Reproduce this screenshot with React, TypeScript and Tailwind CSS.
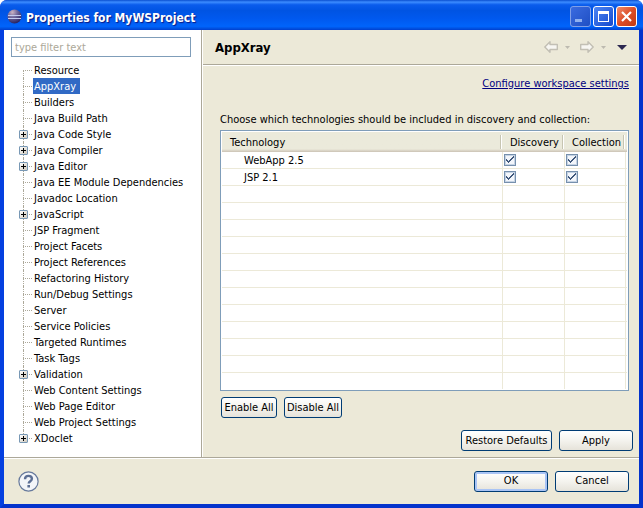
import { useState } from 'react';
import clsx from 'clsx';

const treeItems = [
  { label: 'Resource' },
  { label: 'AppXray' },
  { label: 'Builders' },
  { label: 'Java Build Path' },
  { label: 'Java Code Style', expandable: true },
  { label: 'Java Compiler', expandable: true },
  { label: 'Java Editor', expandable: true },
  { label: 'Java EE Module Dependencies' },
  { label: 'Javadoc Location' },
  { label: 'JavaScript', expandable: true },
  { label: 'JSP Fragment' },
  { label: 'Project Facets' },
  { label: 'Project References' },
  { label: 'Refactoring History' },
  { label: 'Run/Debug Settings' },
  { label: 'Server' },
  { label: 'Service Policies' },
  { label: 'Targeted Runtimes' },
  { label: 'Task Tags' },
  { label: 'Validation', expandable: true },
  { label: 'Web Content Settings' },
  { label: 'Web Page Editor' },
  { label: 'Web Project Settings' },
  { label: 'XDoclet', expandable: true },
];

const technologies = ['WebApp 2.5', 'JSP 2.1'];
const emptyRows = Array.from({ length: 12 }, (_, i) => i);

interface ButtonProps {
  label: string;
  className?: string;
  isDefault?: boolean;
  onClick?: () => void;
}

function Button({ label, className, isDefault, onClick }: ButtonProps) {
  return (
    <button
      type="button"
      onClick={onClick}
      className={clsx(
        'h-[21px] shrink-0 rounded-[3px] border border-[#003c74] bg-linear-to-b from-white via-[#f4f3ee] to-[#e6e3da] text-center leading-[18px] whitespace-nowrap',
        isDefault && 'shadow-[inset_0_0_0_2px_#a9c4f5]',
        className
      )}
    >
      {label}
    </button>
  );
}

function Check({ label, checked, onChange }: { label: string; checked: boolean; onChange: () => void }) {
  return (
    <div className="relative ml-px h-3 w-3">
      <input
        type="checkbox"
        aria-label={label}
        checked={checked}
        onChange={onChange}
        className="block h-3 w-3 appearance-none border border-[#7690ad] bg-[#f3f6fb] shadow-[inset_0_0_0_1px_#c5d3e4]"
      />
      {checked && (
        <svg viewBox="0 0 12 12" className="pointer-events-none absolute inset-0 h-3 w-3" fill="#40587c" shapeRendering="crispEdges">
          <path d="M2 5h1v1h1v1h1v-1h1v-1h1v-1h1v-1h1v-1h1v2h-1v1h-1v1h-1v1h-1v1h-1v1h-1v-1h-1v-1h-1z" />
        </svg>
      )}
    </div>
  );
}

function TitleBar() {
  return (
    <header className="flex h-[30px] items-center bg-[linear-gradient(180deg,#0a4fd0_0%,#3c8cff_7%,#0a5cec_16%,#0054e3_35%,#0058ee_60%,#0064fb_88%,#0050e0_95%,#003fcf_100%)] pr-[6px] pl-[7px]">
      <svg viewBox="0 0 15 15" className="mt-[3px] h-[15px] w-[15px] shrink-0">
        <defs>
          <radialGradient id="globe" cx="0.35" cy="0.2" r="0.8">
            <stop offset="0" stopColor="#cbb3c2" />
            <stop offset="0.45" stopColor="#6f679c" />
            <stop offset="1" stopColor="#2a2562" />
          </radialGradient>
        </defs>
        <circle cx="7.5" cy="7.5" r="7" fill="url(#globe)" />
        <path d="M1 6.5h13M1 9.5h13" stroke="#c4cbee" strokeWidth="1" />
      </svg>
      <h1 className="mt-[5px] ml-1 flex-1 text-[12px] leading-4 font-bold whitespace-nowrap text-white [text-shadow:1px_1px_1px_#0a1883]">
        Properties for MyWSProject
      </h1>
      <div className="mt-[3px] flex gap-[2px]">
        <button type="button" aria-label="Minimize" className="h-[21px] w-[21px] rounded-[3px] border border-[#7f9fe8] bg-linear-to-br from-[#3a6be0] to-[#1f4fc4]">
          <svg viewBox="0 0 19 19" className="h-full w-full">
            <path d="M4 12h7v3h-7z" fill="#8fb0f0" />
          </svg>
        </button>
        <button type="button" aria-label="Maximize" className="h-[21px] w-[21px] rounded-[3px] border border-white bg-linear-to-br from-[#4e86f4] to-[#1447cc]">
          <svg viewBox="0 0 19 19" className="h-full w-full" shapeRendering="crispEdges">
            <path d="M4 4h11v11h-11zM5 7v7h9v-7z" fill="#fff" fillRule="evenodd" />
          </svg>
        </button>
        <button type="button" aria-label="Close" className="h-[21px] w-[21px] rounded-[3px] border border-white bg-linear-to-br from-[#f08a68] via-[#dc4d26] to-[#c03a14]">
          <svg viewBox="0 0 19 19" className="h-full w-full">
            <path d="M5 5l9 9M14 5l-9 9" stroke="#fff" strokeWidth="2.2" />
          </svg>
        </button>
      </div>
    </header>
  );
}

interface SidebarProps {
  selected: string;
  onSelect: (label: string) => void;
}

function Sidebar({ selected, onSelect }: SidebarProps) {
  return (
    <aside className="w-[198px] shrink-0 border-r border-[#aca899] bg-white pt-[7px] pb-[11px]">
      <input
        type="text"
        aria-label="Filter"
        placeholder="type filter text"
        className="mr-[10px] ml-[7px] block h-5 w-[180px] border border-[#7f9db9] bg-white px-[3px] leading-4 placeholder:text-[#aca899]"
      />
      <ul className="mt-[5px] pl-[15px]">
        {treeItems.map(({ label, expandable }, i) => (
          <li key={label} className="relative flex h-4 items-center">
            <span
              className={clsx(
                'absolute left-1 border-l border-dotted border-[#aca899]',
                i === 0 ? 'top-2 bottom-0' : i === treeItems.length - 1 ? 'top-0 bottom-2' : 'inset-y-0'
              )}
            />
            <span className="absolute top-2 left-1 w-[9px] border-t border-dotted border-[#aca899]" />
            {expandable && (
              <button
                type="button"
                aria-label={`Expand ${label}`}
                className="absolute top-1 left-0 h-[9px] w-[9px] rounded-[1px] border border-[#7898b5] bg-linear-to-br from-white to-[#cfc9bd]"
              >
                <svg viewBox="0 0 7 7" className="block h-[7px] w-[7px]" shapeRendering="crispEdges">
                  <path d="M1 3h5v1h-5zM3 1h1v5h-1z" fill="#000" />
                </svg>
              </button>
            )}
            <button
              type="button"
              onClick={() => onSelect(label)}
              className={clsx(
                'ml-[14px] h-4 pt-px pr-1 pl-px leading-4 whitespace-nowrap',
                selected === label && 'bg-[#316ac5] text-white'
              )}
            >
              {label}
            </button>
          </li>
        ))}
      </ul>
    </aside>
  );
}

function NavArrow({ flip }: { flip?: boolean }) {
  return (
    <svg viewBox="0 0 14 12" className={clsx('h-3 w-[14px]', flip && '-scale-x-100')}>
      <path d="M0.8 6L6 0.8V3.5H13.3V8.5H6V11.2Z" fill="#f7f6f2" stroke="#c2bfb4" strokeWidth="1.4" strokeLinejoin="round" />
    </svg>
  );
}

function PageHeader() {
  return (
    <div className="flex h-[35px] items-center border-b border-[#aca899] pr-[12px] pl-3 shadow-[0_1px_0_#fff]">
      <h2 className="mt-[2px] flex-1 text-[13px] leading-4 font-bold">AppXray</h2>
      <button type="button" aria-label="Back">
        <NavArrow />
      </button>
      <button type="button" aria-label="Back history" className="ml-[7px]">
        <svg viewBox="0 0 5 3" className="h-[3px] w-[5px]">
          <path d="M0 0h5L2.5 3z" fill="#bdbab0" />
        </svg>
      </button>
      <button type="button" aria-label="Forward" className="ml-[10px]">
        <NavArrow flip />
      </button>
      <button type="button" aria-label="Forward history" className="ml-[7px]">
        <svg viewBox="0 0 5 3" className="h-[3px] w-[5px]">
          <path d="M0 0h5L2.5 3z" fill="#bdbab0" />
        </svg>
      </button>
      <button type="button" aria-label="Menu" className="ml-[11px]">
        <svg viewBox="0 0 10 5" className="h-[5px] w-[10px]">
          <path d="M0 0h10L5 5z" fill="#2c2850" />
        </svg>
      </button>
    </div>
  );
}

const headSpan = 'block h-[14px] border-r border-[#c7c5b2] leading-4 shadow-[1px_0_0_#fff]';
const cell = 'h-[17px] border-r border-b border-[#ece9d8] p-0 group-last:border-b-0 group-last:h-4';

interface TechnologyTableProps {
  checks: Record<string, boolean>;
  onToggle: (key: string) => void;
}

function TechnologyTable({ checks, onToggle }: TechnologyTableProps) {
  return (
    <div className="mt-px border border-[#7f9db9] bg-white p-px">
      <table className="w-full table-fixed border-separate border-spacing-0">
        <colgroup>
          <col />
          <col className="w-[62px]" />
          <col className="w-[61px]" />
          <col className="w-px" />
        </colgroup>
        <thead>
          <tr className="bg-linear-to-b from-[#ebeadb] from-85% to-[#cbc2b4] text-left">
            <th className="h-5 p-0 pr-[2px] font-normal">
              <span className={clsx(headSpan, 'pl-2')}>Technology</span>
            </th>
            <th className="h-5 p-0 pr-[2px] font-normal">
              <span className={clsx(headSpan, 'pl-[7px]')}>Discovery</span>
            </th>
            <th className="h-5 p-0 pr-[2px] font-normal">
              <span className={clsx(headSpan, 'pl-[7px]')}>Collection</span>
            </th>
            <th className="p-0" />
          </tr>
        </thead>
        <tbody>
          {technologies.map((name) => (
            <tr key={name} className="group">
              <td className={clsx(cell, 'pl-[22px]')}>
                <span className="block h-4 leading-[18px]">{name}</span>
              </td>
              {['discovery', 'collection'].map((col) => (
                <td key={col} className={cell}>
                  <Check
                    label={`${name} ${col}`}
                    checked={checks[`${name} ${col}`]}
                    onChange={() => onToggle(`${name} ${col}`)}
                  />
                </td>
              ))}
              <td className="border-b border-[#ece9d8] p-0" />
            </tr>
          ))}
          {emptyRows.map((row) => (
            <tr key={row} className="group">
              <td className={cell} />
              <td className={cell} />
              <td className={cell} />
              <td className="border-b border-[#ece9d8] p-0 group-last:border-b-0" />
            </tr>
          ))}
        </tbody>
      </table>
    </div>
  );
}

const allChecks = (value: boolean) =>
  Object.fromEntries(technologies.flatMap((t) => [[`${t} discovery`, value], [`${t} collection`, value]]));

export default function App() {
  const [selected, setSelected] = useState('AppXray');
  const [checks, setChecks] = useState<Record<string, boolean>>(allChecks(true));

  return (
    <div className="flex min-h-screen flex-col overflow-hidden rounded-t-[7px] bg-[#0831d9] font-['DejaVu_Sans_Condensed','DejaVu_Sans',sans-serif] text-[11px] text-black">
      <TitleBar />

      <div className="flex flex-1 flex-col border-x-4 border-b-4 border-[#0540e0] border-r-[#0433cc] border-b-[#0433cc] bg-[#ece9d8]">
        <div className="flex flex-1">
          <Sidebar selected={selected} onSelect={setSelected} />

          <main className="flex min-w-0 flex-1 flex-col border-l border-white">
            <PageHeader />
            <div className="flex flex-1 flex-col pt-[10px] pr-[10px] pb-[6px] pl-[17px]">
              <a href="#workspace" className="self-end leading-[18px] text-[#000080] underline">
                Configure workspace settings
              </a>
              <p className="mt-[18px] leading-[18px]">
                Choose which technologies should be included in discovery and collection:
              </p>
              <TechnologyTable
                checks={checks}
                onToggle={(key) => setChecks({ ...checks, [key]: !checks[key] })}
              />
              <div className="mt-[6px] flex gap-[7px] pl-px">
                <Button label="Enable All" className="w-[56px]" onClick={() => setChecks(allChecks(true))} />
                <Button label="Disable All" className="w-[58px]" onClick={() => setChecks(allChecks(false))} />
              </div>
              <div className="mt-auto -mr-1 flex justify-end gap-[7px]">
                <Button label="Restore Defaults" className="w-[91px]" onClick={() => setChecks(allChecks(true))} />
                <Button label="Apply" className="w-[74px]" />
              </div>
            </div>
          </main>
        </div>

        <footer className="flex h-[47px] items-center border-t border-[#aca899] pr-[10px] pl-[14px] shadow-[inset_0_1px_0_#fff]">
          <button type="button" aria-label="Help" className="mr-auto">
            <svg viewBox="0 0 21 21" className="block h-[21px] w-[21px]">
              <circle cx="10.5" cy="10.5" r="9.6" fill="#f3f5f8" stroke="#66799c" strokeWidth="1.2" />
              <path d="M7 8.2C7 5.8 8.4 4.9 10.4 4.9C12.5 4.9 13.9 6 13.9 7.8C13.9 10.2 10.7 10.2 10.7 12.6" fill="none" stroke="#5c6f94" strokeWidth="2.4" />
              <path d="M9.4 14h2.6v2.5h-2.6z" fill="#5c6f94" />
            </svg>
          </button>
          <div className="flex gap-[7px]">
            <Button label="OK" className="w-[74px]" isDefault />
            <Button label="Cancel" className="w-[74px]" />
          </div>
        </footer>
      </div>
    </div>
  );
}
